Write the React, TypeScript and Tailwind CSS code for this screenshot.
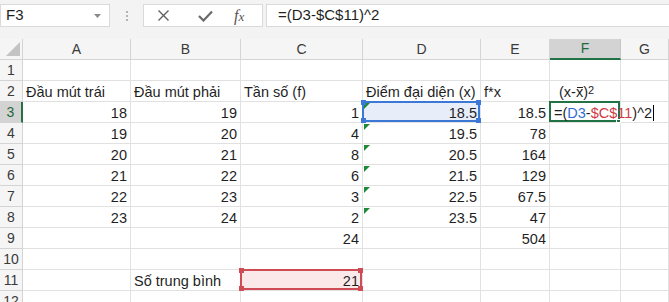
import React from "react";

type Align = "l" | "r";
type CellDef = { v?: React.ReactNode; a?: Align };

const COLS = [
  { key: "A", w: "w-[108px]" },
  { key: "B", w: "w-[110px]" },
  { key: "C", w: "w-[122px]" },
  { key: "D", w: "w-[118px]" },
  { key: "E", w: "w-[69px]" },
  { key: "F", w: "w-[71px]" },
  { key: "G", w: "flex-1" },
];

const num = (v: string | number): CellDef => ({ v: String(v), a: "r" });
const txt = (v: React.ReactNode): CellDef => ({ v, a: "l" });

const ROWS: Record<number, Record<string, CellDef>> = {
  2: {
    A: txt("Đầu mút trái"),
    B: txt("Đầu mút phải"),
    C: txt("Tần số (f)"),
    D: txt("Điểm đại diện (x)"),
    E: txt("f*x"),
    F: txt(
      <span className="pl-[6px]">
        (x-<span className="relative">x<span className="absolute left-[1px] right-0 top-[3px] h-px bg-[#222]" /></span>)
        <sup className="text-[11px] relative -top-[3px]">2</sup>
      </span>
    ),
  },
  3: { A: num(18), B: num(19), C: num(1), D: num("18.5"), E: num("18.5") },
  4: { A: num(19), B: num(20), C: num(4), D: num("19.5"), E: num(78) },
  5: { A: num(20), B: num(21), C: num(8), D: num("20.5"), E: num(164) },
  6: { A: num(21), B: num(22), C: num(6), D: num("21.5"), E: num(129) },
  7: { A: num(22), B: num(23), C: num(3), D: num("22.5"), E: num("67.5") },
  8: { A: num(23), B: num(24), C: num(2), D: num("23.5"), E: num(47) },
  9: { C: num(24), E: num(504) },
  11: { B: txt("Số trung bình"), C: num(21) },
};

function Triangle() {
  return (
    <svg className="absolute left-[1px] top-[1px]" width="6" height="6" viewBox="0 0 6 6">
      <polygon points="0,0 6,0 0,6" fill="#1d8a3a" />
    </svg>
  );
}

function Handles({ color }: { color: string }) {
  const base = "absolute w-[5px] h-[5px]";
  return (
    <>
      <span className={`${base} -left-[3px] -top-[3px]`} style={{ background: color }} />
      <span className={`${base} -right-[3px] -top-[3px]`} style={{ background: color }} />
      <span className={`${base} -left-[3px] -bottom-[3px]`} style={{ background: color }} />
      <span className={`${base} -right-[3px] -bottom-[3px]`} style={{ background: color }} />
    </>
  );
}

function Formula() {
  return (
    <span className="relative z-20 whitespace-nowrap pl-px">
      =(<span className="text-[#2f6fd3]">D3</span>-<span className="text-[#d03a45]">$C$11</span>)^2
      <span className="inline-block w-px h-[16px] bg-black align-[-3px] ml-px" />
    </span>
  );
}

function Cell({ row, col, w }: { row: number; col: string; w: string }) {
  const def = ROWS[row]?.[col];
  const isActive = row === 3 && col === "F";
  const isRefD = row === 3 && col === "D";
  const isRefC = row === 11 && col === "C";
  const tri = col === "D" && row >= 3 && row <= 8;
  const bg = isRefD ? "bg-[#e8eef9]" : isRefC ? "bg-[#fbe9ea]" : "bg-white";
  return (
    <div
      className={`${w} ${bg} relative h-[21px] shrink-0 border-r border-b border-[#e1e1e1] flex items-end leading-[17px] px-[3px] whitespace-nowrap overflow-visible ${
        def?.a === "r" ? "justify-end" : "justify-start"
      }`}
    >
      {isActive ? <Formula /> : <span className="relative z-10">{def?.v}</span>}
      {tri && <Triangle />}
      {isActive && (
        <div className="absolute -left-px -top-px right-0 bottom-0 border-2 border-[#217346] z-10">
          <span className="absolute -right-[3px] -bottom-[3px] w-[5px] h-[4px] bg-[#217346] border border-white" />
        </div>
      )}
      {isRefD && (
        <div className="absolute -left-px -top-px right-0 bottom-0 border-2 border-[#3c79d6] z-10">
          <Handles color="#3c79d6" />
        </div>
      )}
      {isRefC && (
        <div className="absolute -left-px -top-px right-0 bottom-0 border-2 border-[#cf4c55] z-10">
          <Handles color="#cf4c55" />
        </div>
      )}
    </div>
  );
}

export default function App() {
  const rows = Array.from({ length: 12 }, (_, i) => i + 1);
  return (
    <div
      className="w-[669px] h-[302px] overflow-hidden bg-[#f3f3f3] text-[14.5px] text-[#1f1f1f]"
      style={{ fontFamily: '"Liberation Sans", Arial, sans-serif' }}
    >
      {/* formula bar */}
      <div className="h-[39px] flex items-start pt-[4px] text-[15px]">
        <div className="w-[110px] h-[23px] bg-white border border-[#dadada] flex items-center justify-between pl-[5px] pr-[8px]">
          <span>F3</span>
          <svg width="7" height="4" viewBox="0 0 7 4">
            <polygon points="0,0 7,0 3.5,4" fill="#8a8a8a" />
          </svg>
        </div>
        <div className="w-[33px] h-[23px] flex flex-col items-center justify-center gap-[2px]">
          <span className="w-[2px] h-[2px] bg-[#b5b5b5]" />
          <span className="w-[2px] h-[2px] bg-[#b5b5b5]" />
          <span className="w-[2px] h-[2px] bg-[#b5b5b5]" />
        </div>
        <div className="w-[120px] h-[23px] bg-white border border-[#dadada] flex items-center text-[#555]">
          <svg className="ml-[13px]" width="13" height="13" viewBox="0 0 13 13">
            <path d="M1.5 1.5 L11.5 11.5 M11.5 1.5 L1.5 11.5" stroke="#5f5f5f" strokeWidth="1.4" />
          </svg>
          <svg className="ml-[28px]" width="15" height="12" viewBox="0 0 15 12">
            <path d="M1 6 L5.5 10.5 L14 1.5" stroke="#6a6a6a" strokeWidth="2.2" fill="none" />
          </svg>
          <span
            className="ml-[21px] italic text-[16px] text-[#555]"
            style={{ fontFamily: '"Liberation Serif", "Times New Roman", serif' }}
          >
            f<span className="text-[13px]">x</span>
          </span>
        </div>
        <div className="ml-[3px] flex-1 h-[23px] bg-white border border-[#dadada] border-r-0 flex items-center pl-[11px]">
          =(D3-$C$11)^2
        </div>
      </div>

      {/* column headers */}
      <div className="flex h-[21px] bg-[#f5f5f5] text-[14px] text-[#3a3a3a]">
        <div className="w-[23px] shrink-0 relative border-r border-b border-[#d4d4d4]">
          <svg className="absolute right-[2px] bottom-[3px]" width="14" height="14" viewBox="0 0 14 14">
            <polygon points="14,0 14,14 0,14" fill="#c3c3c3" />
          </svg>
        </div>
        {COLS.map((c) => {
          const sel = c.key === "F";
          return (
            <div
              key={c.key}
              className={`${c.w} shrink-0 flex items-center justify-center border-r ${
                sel
                  ? "bg-[#d3d3d3] text-[#1e6b3f] border-b-2 border-b-[#217346] border-r-[#c6c6c6]"
                  : "border-b border-[#d4d4d4]"
              }`}
            >
              {c.key}
            </div>
          );
        })}
      </div>

      {/* rows */}
      {rows.map((r) => {
        const sel = r === 3;
        return (
          <div key={r} className="flex">
            <div
              className={`w-[23px] h-[21px] shrink-0 flex items-center justify-center text-[14px] border-b border-[#d4d4d4] ${
                sel
                  ? "bg-[#d3d3d3] text-[#1e6b3f] border-r-2 border-r-[#217346]"
                  : "bg-[#f5f5f5] text-[#3a3a3a] border-r border-r-[#d4d4d4]"
              }`}
            >
              {r}
            </div>
            {COLS.map((c) => (
              <Cell key={c.key} row={r} col={c.key} w={c.w} />
            ))}
          </div>
        );
      })}
    </div>
  );
}
